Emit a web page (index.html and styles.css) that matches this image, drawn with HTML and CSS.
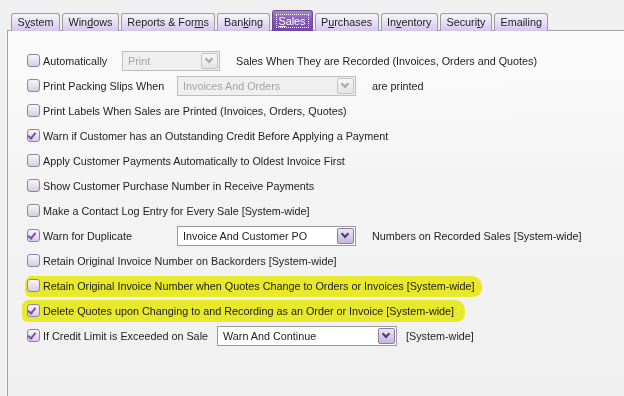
FILE: index.html
```html
<!DOCTYPE html>
<html lang="en">
<head>
  <meta charset="UTF-8" />
  <title>Sales Preferences</title>
  <link rel="stylesheet" href="styles.css">
</head>
<body>

  <div class="tabs">
    <div class="tab">S<u>y</u>stem</div>
    <div class="tab">Win<u>d</u>ows</div>
    <div class="tab">Reports &amp; For<u>m</u>s</div>
    <div class="tab">Ban<u>k</u>ing</div>
    <div class="tab active"><span class="focus"><u>S</u>ales</span></div>
    <div class="tab">P<u>u</u>rchases</div>
    <div class="tab">In<u>v</u>entory</div>
    <div class="tab">Securi<u>t</u>y</div>
    <div class="tab">Emailing</div>
  </div>

  <div class="panel">

    <div class="row">
      <span class="check"></span>
      <span class="lbl lbl-a">Automatically</span>
      <div class="select disabled w-print"><span>Print</span><span class="arrow"></span></div>
      <span class="after">Sales When They are Recorded (Invoices, Orders and Quotes)</span>
    </div>

    <div class="row">
      <span class="check"></span>
      <span class="lbl lbl-b">Print Packing Slips When</span>
      <div class="select disabled w-wide"><span>Invoices And Orders</span><span class="arrow"></span></div>
      <span class="after">are printed</span>
    </div>

    <div class="row">
      <span class="check"></span>
      <span class="lbl">Print Labels When Sales are Printed (Invoices, Orders, Quotes)</span>
    </div>

    <div class="row">
      <span class="check on"></span>
      <span class="lbl">Warn if Customer has an Outstanding Credit Before Applying a Payment</span>
    </div>

    <div class="row">
      <span class="check"></span>
      <span class="lbl">Apply Customer Payments Automatically to Oldest Invoice First</span>
    </div>

    <div class="row">
      <span class="check"></span>
      <span class="lbl">Show Customer Purchase Number in Receive Payments</span>
    </div>

    <div class="row">
      <span class="check"></span>
      <span class="lbl">Make a Contact Log Entry for Every Sale [System-wide]</span>
    </div>

    <div class="row">
      <span class="check on"></span>
      <span class="lbl lbl-b">Warn for Duplicate</span>
      <div class="select w-wide"><span>Invoice And Customer PO</span><span class="arrow"></span></div>
      <span class="after">Numbers on Recorded Sales [System-wide]</span>
    </div>

    <div class="row">
      <span class="check"></span>
      <span class="lbl">Retain Original Invoice Number on Backorders [System-wide]</span>
    </div>

    <div class="row marked mark-1">
      <span class="check"></span>
      <span class="lbl">Retain Original Invoice Number when Quotes Change to Orders or Invoices [System-wide]</span>
    </div>

    <div class="row marked mark-2">
      <span class="check on"></span>
      <span class="lbl">Delete Quotes upon Changing to and Recording as an Order or Invoice [System-wide]</span>
    </div>

    <div class="row">
      <span class="check on"></span>
      <span class="lbl lbl-c">If Credit Limit is Exceeded on Sale</span>
      <div class="select w-credit"><span>Warn And Continue</span><span class="arrow"></span></div>
      <span class="after after-near">[System-wide]</span>
    </div>

  </div>

</body>
</html>
```

FILE: styles.css
```css
body {
  margin: 0;
  height: 396px;
  overflow: hidden;
  background: #f0f0f0;
  font-family: "Liberation Sans", Arial, sans-serif;
  font-size: 10.8px;
  color: #222;
}

/* Tab strip */
.tabs {
  display: flex;
  align-items: flex-end;
  gap: 2px;
  padding: 11px 0 0 11px;
  height: 20px;
  position: relative;
  z-index: 1;
  margin-bottom: -1px;
}

.tab {
  height: 17px;
  line-height: 17px;
  padding: 0 5.5px;
  border: 1px solid #9c9ca4;
  border-bottom: none;
  border-radius: 3px 3px 0 0;
  background: linear-gradient(#f6f3fb, #e6dcf3 55%, #d6c6ec);
  color: #222;
}

.tab.active {
  height: 20px;
  line-height: 20px;
  padding: 0 4px;
  border-color: #6d4a93;
  background: linear-gradient(#a77fd2, #8358b5 50%, #7447a6);
  color: #fff;
}

.focus {
  outline: 1px dotted #fff;
  padding: 0 2px;
}

/* Preferences panel */
.panel {
  margin-left: 7px;
  height: 360px;
  border-left: 1px solid #a3a3a3;
  border-top: 1px solid #a3a3a3;
  background: linear-gradient(#fcfcfc, #f3f3f3 45%, #f0f0f0);
  padding: 17px 0 0 19px;
}

.row {
  display: flex;
  align-items: center;
  height: 25px;
  white-space: nowrap;
}

.check {
  flex: none;
  width: 11px;
  height: 11px;
  border: 1px solid #8b8799;
  border-radius: 3px;
  background: linear-gradient(#f7f5fb, #d4cde3);
  margin-right: 3px;
  position: relative;
}

.check.on::after {
  content: "";
  position: absolute;
  left: 1px;
  top: 2px;
  width: 6px;
  height: 3px;
  border-left: 2px solid #7a4cae;
  border-bottom: 2px solid #7a4cae;
  transform: rotate(-50deg);
  transform-origin: 4px 4px;
}

.lbl {
  flex: none;
}

.lbl-a { width: 79px; }
.lbl-b { width: 134px; }
.lbl-c { width: 174px; }

/* Dropdowns */
.select {
  flex: none;
  height: 18px;
  display: flex;
  align-items: center;
  justify-content: space-between;
  border: 1px solid #9a9a9a;
  background: #fff;
  padding: 0 1px 0 5px;
}

.select.disabled {
  border-color: #bdbdbd;
  background: #efefef;
  color: #a3a3a3;
}

.w-print { width: 90px; }
.w-wide { width: 171px; }
.w-credit { width: 172px; }

.arrow {
  width: 15px;
  height: 14px;
  border: 1px solid #8c7aa8;
  border-radius: 2px;
  background: linear-gradient(#ede6f6, #c5b4dd);
  position: relative;
}

.arrow::after {
  content: "";
  position: absolute;
  left: 4px;
  top: 2px;
  width: 4px;
  height: 4px;
  border-right: 2px solid #4a3c63;
  border-bottom: 2px solid #4a3c63;
  transform: rotate(45deg);
}

.disabled .arrow {
  border-color: #c4c4c4;
  background: linear-gradient(#f6f6f6, #e4e4e4);
}

.disabled .arrow::after {
  border-color: #a8a8a8;
}

.after {
  margin-left: 16px;
}

.after-near {
  margin-left: 9px;
}

/* Yellow marker highlight */
.marked {
  position: relative;
}

.marked::before {
  content: "";
  position: absolute;
  background: #f6f62e;
  mix-blend-mode: multiply;
  border-radius: 6px 10px 9px 5px / 8px 10px 8px 6px;
}

.mark-1::before {
  left: -2px;
  top: 3px;
  width: 457px;
  height: 21px;
}

.mark-2::before {
  left: -5px;
  top: 2px;
  width: 443px;
  height: 22px;
}
```
